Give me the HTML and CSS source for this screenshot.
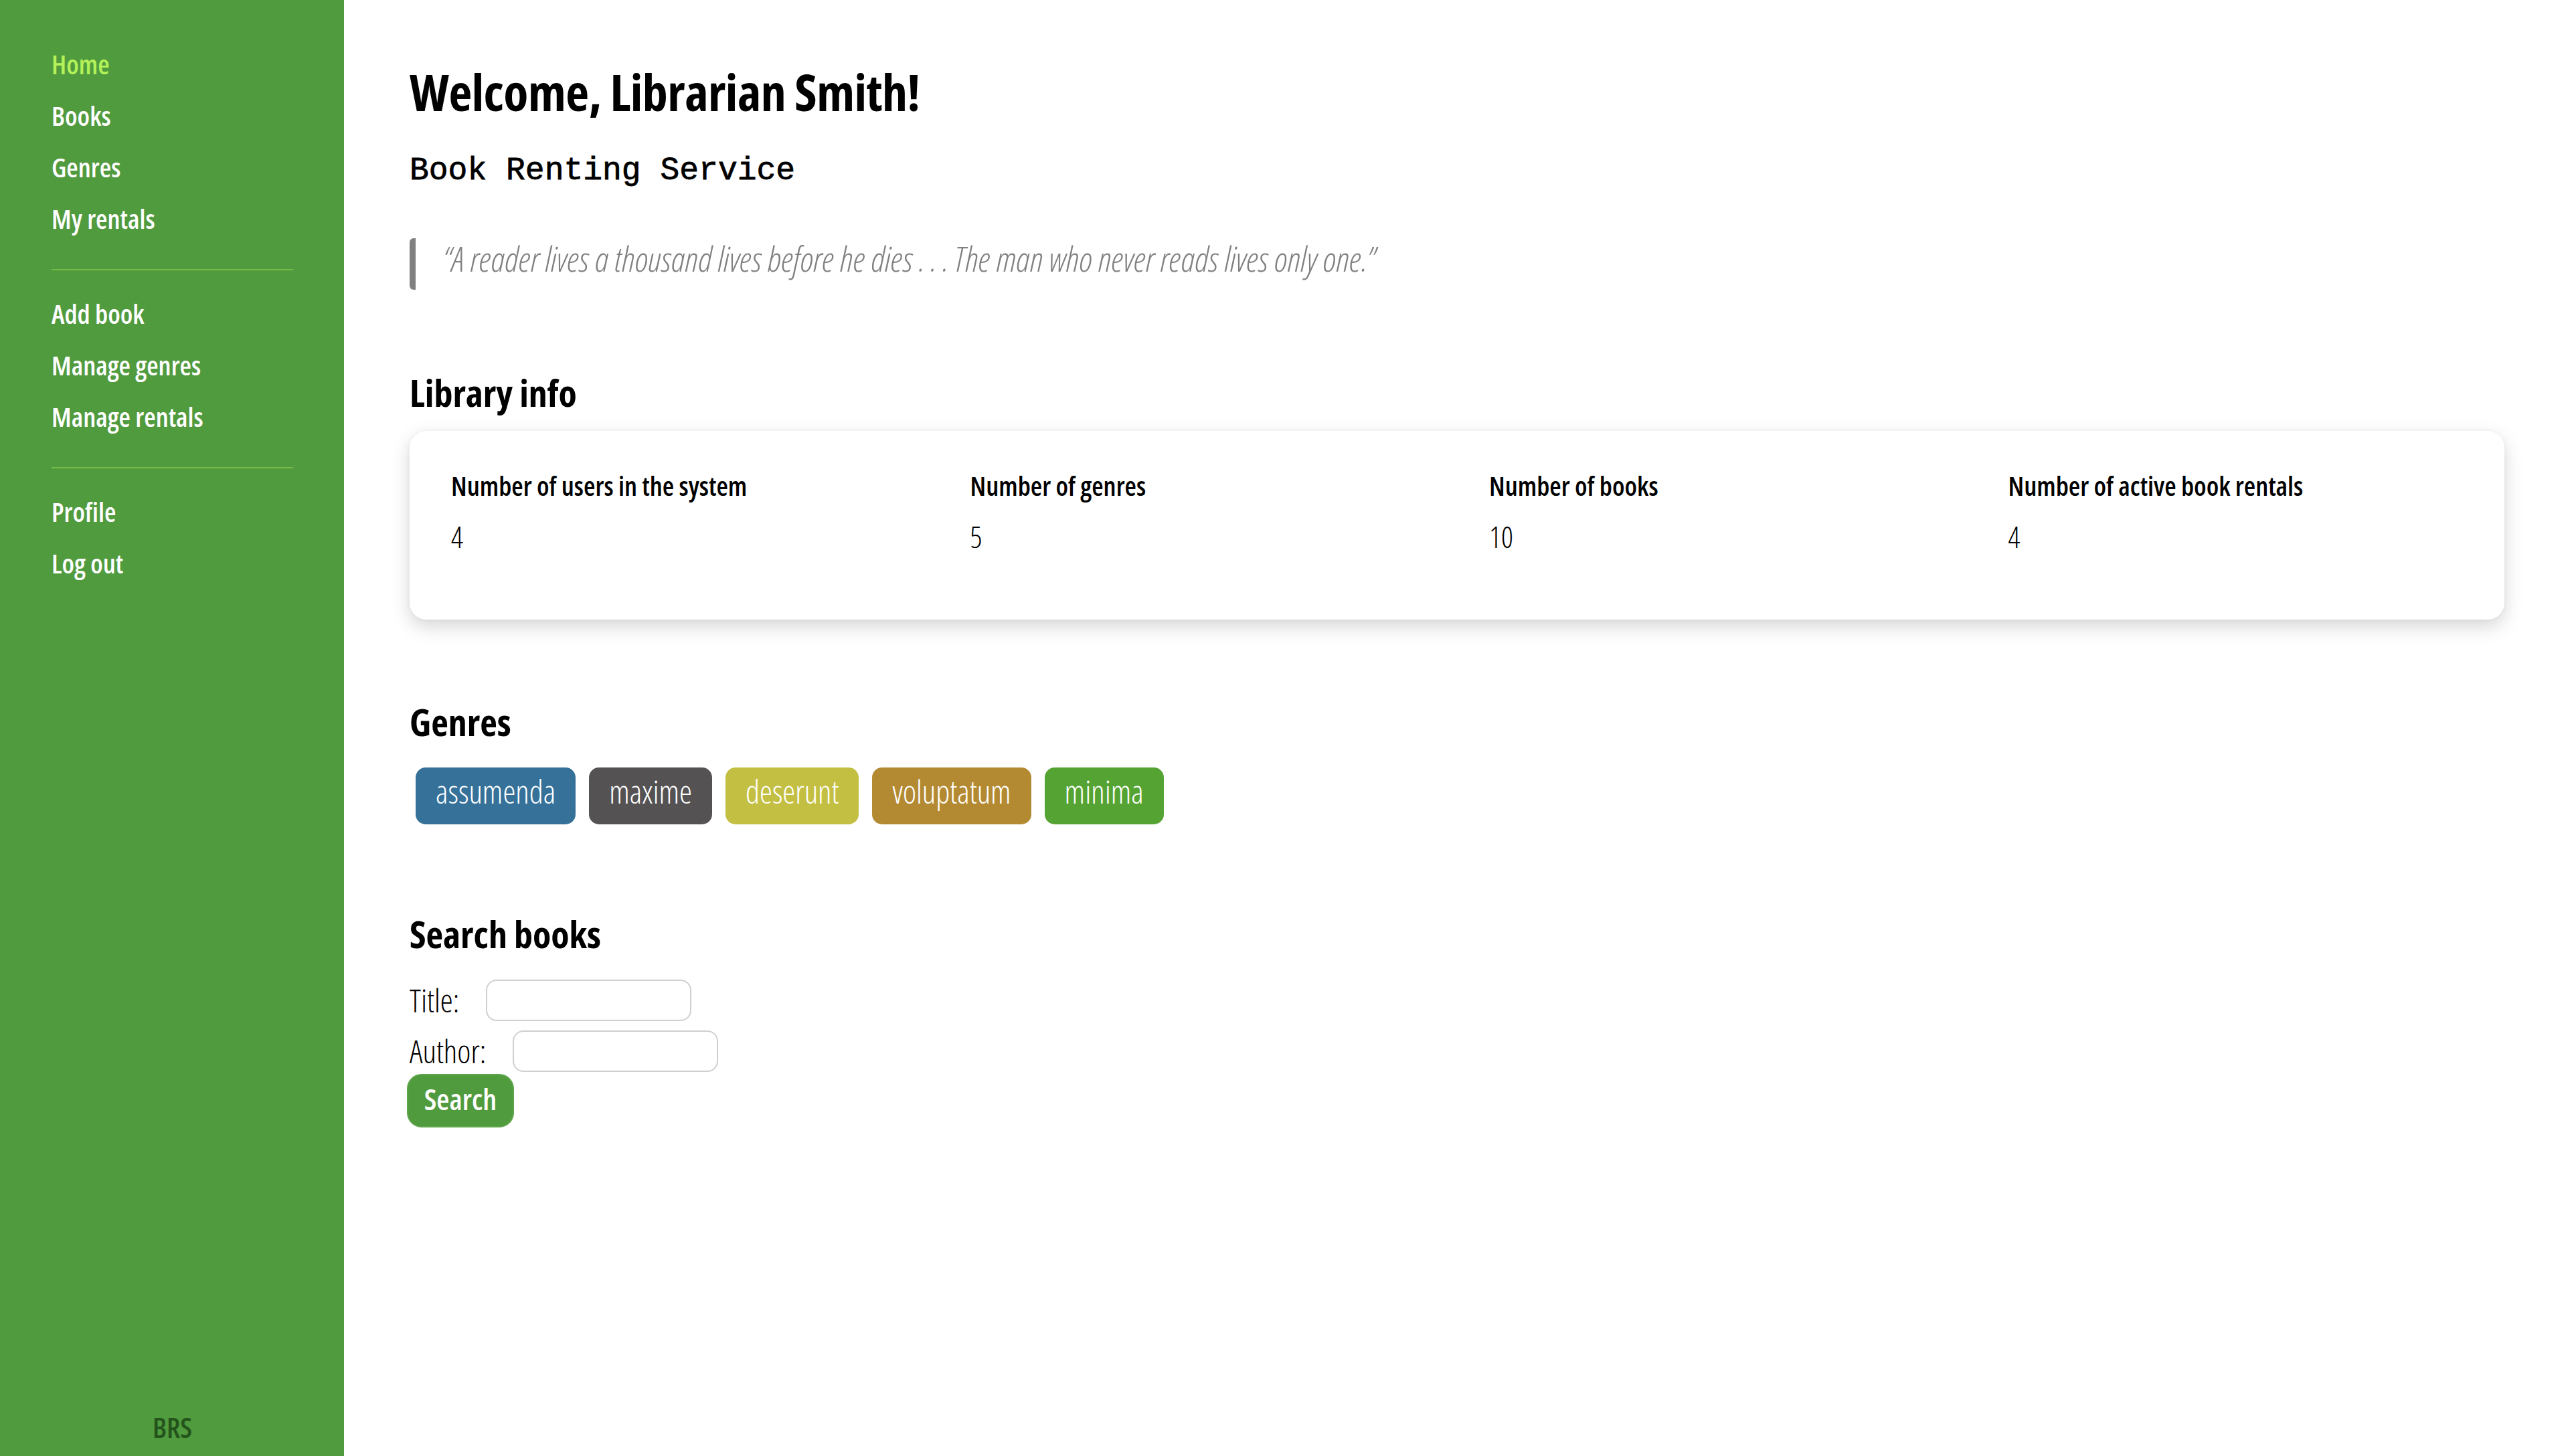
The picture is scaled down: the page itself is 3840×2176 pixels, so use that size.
FILE: index.html
```html
<!DOCTYPE html>
<html lang="en">
<head>
<meta charset="utf-8">
<title>Book Renting Service</title>
<link rel="stylesheet" href="styles.css">
</head>
<body>
<div class="layout">
  <nav class="sidebar">
    <ul class="nav-group">
      <li><a class="nav-link active" href="#">Home</a></li>
      <li><a class="nav-link" href="#">Books</a></li>
      <li><a class="nav-link" href="#">Genres</a></li>
      <li><a class="nav-link" href="#">My rentals</a></li>
    </ul>
    <hr class="nav-sep">
    <ul class="nav-group">
      <li><a class="nav-link" href="#">Add book</a></li>
      <li><a class="nav-link" href="#">Manage genres</a></li>
      <li><a class="nav-link" href="#">Manage rentals</a></li>
    </ul>
    <hr class="nav-sep">
    <ul class="nav-group">
      <li><a class="nav-link" href="#">Profile</a></li>
      <li><a class="nav-link" href="#">Log out</a></li>
    </ul>
    <div class="brand">BRS</div>
  </nav>

  <main class="content">
    <h1 class="title">Welcome, Librarian Smith!</h1>
    <p class="subtitle">Book Renting Service</p>
    <blockquote class="quote">“A reader lives a thousand lives before he dies . . . The man who never reads lives only one.”</blockquote>

    <h2 class="section-title section-info">Library info</h2>
    <div class="info-card">
      <div class="stat">
        <div class="stat-label">Number of users in the system</div>
        <div class="stat-value">4</div>
      </div>
      <div class="stat">
        <div class="stat-label">Number of genres</div>
        <div class="stat-value">5</div>
      </div>
      <div class="stat">
        <div class="stat-label">Number of books</div>
        <div class="stat-value">10</div>
      </div>
      <div class="stat">
        <div class="stat-label">Number of active book rentals</div>
        <div class="stat-value">4</div>
      </div>
    </div>

    <h2 class="section-title section-genres">Genres</h2>
    <div class="genres">
      <a class="genre genre-blue" href="#">assumenda</a>
      <a class="genre genre-gray" href="#">maxime</a>
      <a class="genre genre-yellow" href="#">deserunt</a>
      <a class="genre genre-bronze" href="#">voluptatum</a>
      <a class="genre genre-green" href="#">minima</a>
    </div>

    <h2 class="section-title section-search">Search books</h2>
    <form class="search-form">
      <label class="form-row"><span class="form-label">Title:</span><input class="form-input" type="text"></label>
      <label class="form-row"><span class="form-label">Author:</span><input class="form-input" type="text"></label>
      <button class="search-btn" type="button">Search</button>
    </form>
  </main>
</div>
</body>
</html>
```
FILE: styles.css
```css
html, body {
  margin: 0;
  padding: 0;
  background: #ffffff;
}

body {
  font-family: "Open Sans", "Roboto", "DejaVu Sans Condensed", sans-serif;
  font-stretch: 75%;
  color: #000;
}

.layout {
  display: flex;
  min-height: 2176px;
}

/* ---------- Sidebar ---------- */
.sidebar {
  width: 514px;
  flex: 0 0 514px;
  box-sizing: border-box;
  background: #519b3f;
  padding: 57px 76px 5px 77px;
  display: flex;
  flex-direction: column;
}

.nav-group {
  list-style: none;
  margin: 0;
  padding: 0;
}

.nav-link {
  display: block;
  font-size: 40px;
  font-weight: 600;
  line-height: 77px;
  color: #ffffff;
  text-decoration: none;
  white-space: nowrap;
}

.nav-link.active {
  color: #b4f25a;
}

.nav-sep {
  border: 0;
  height: 2px;
  background: #76bb45;
  margin: 37px 0 26px;
}

.brand {
  margin-top: auto;
  text-align: center;
  font-size: 42px;
  font-weight: 600;
  line-height: 77px;
  color: #24541b;
}

/* ---------- Content ---------- */
.content {
  flex: 1;
  padding: 87px 98px 80px 98px;
  min-width: 0;
}

.title {
  margin: 0;
  font-size: 76px;
  font-weight: 700;
  line-height: 99px;
  letter-spacing: -0.5px;
}

.subtitle {
  margin: 39px 0 0;
  font-family: "Liberation Mono", "DejaVu Sans Mono", monospace;
  font-stretch: normal;
  font-size: 48px;
  line-height: 60px;
  -webkit-text-stroke: 0.8px #000;
}

.quote {
  margin: 71px 0 0;
  padding: 0 0 17px 41px;
  border-left: 9px solid #808080;
  border-radius: 6px 0 0 6px;
  font-size: 52px;
  font-weight: 300;
  font-style: italic;
  line-height: 60px;
  color: #808080;
  white-space: nowrap;
}

.section-title {
  margin: 0;
  font-size: 56px;
  font-weight: 700;
  line-height: 67px;
}

.section-info { margin-top: 120px; }
.section-genres { margin-top: 119px; }
.section-search { margin-top: 130px; }

/* ---------- Info card ---------- */
.info-card {
  margin-top: 24px;
  height: 282px;
  box-sizing: border-box;
  padding: 58px 62px 0;
  background: #fff;
  border-radius: 25px;
  box-shadow: 0 10px 28px rgba(0, 0, 0, 0.17), 0 0 6px rgba(0, 0, 0, 0.04);
  display: grid;
  grid-template-columns: repeat(4, 1fr);
  column-gap: 96px;
  align-items: start;
}

.stat-label {
  font-size: 40px;
  font-weight: 600;
  line-height: 48px;
  white-space: nowrap;
}

.stat-value {
  margin-top: 30px;
  font-size: 44px;
  font-weight: 300;
  line-height: 44px;
}

/* ---------- Genres ---------- */
.genres {
  margin-top: 35px;
  padding-left: 9px;
  display: flex;
  gap: 20px;
}

.genre {
  display: block;
  padding: 0 30px 14px;
  line-height: 71px;
  font-size: 48px;
  font-weight: 300;
  color: #ffffff;
  text-decoration: none;
  border-radius: 15px;
}

.genre-blue { background: #357199; }
.genre-gray { background: #545253; }
.genre-yellow { background: #c3bf42; }
.genre-bronze { background: #b38a32; }
.genre-green { background: #55a433; }

/* ---------- Search form ---------- */
.search-form {
  margin-top: 35px;
  display: flex;
  flex-direction: column;
  align-items: flex-start;
}

.form-row {
  display: flex;
  align-items: center;
  gap: 40px;
  height: 62px;
  margin-bottom: 14px;
}

.form-row + .form-row {
  margin-bottom: 3px;
}

.form-label {
  font-size: 48px;
  font-weight: 300;
  line-height: 62px;
}

.form-input {
  width: 307px;
  height: 62px;
  box-sizing: border-box;
  border: 2px solid #cfcfcf;
  border-radius: 16px;
  background: #fff;
  font: inherit;
  font-size: 32px;
  padding: 0 14px;
}

.search-btn {
  margin-left: -4px;
  width: 160px;
  height: 80px;
  box-sizing: border-box;
  border: 2px solid #5ea64a;
  border-radius: 22px;
  background: #519b3f;
  color: #ffffff;
  font-family: inherit;
  font-stretch: 75%;
  font-size: 44px;
  font-weight: 600;
  line-height: 1;
  padding: 0 0 6px;
  cursor: pointer;
}
```
